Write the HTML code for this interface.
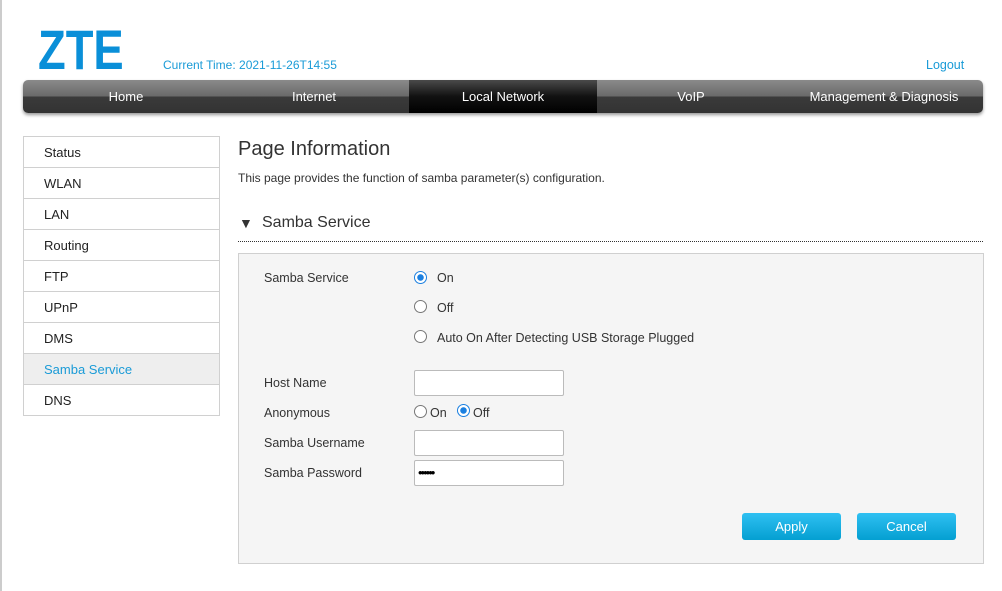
<!DOCTYPE html>
<html><head><style>
body{margin:0;width:1002px;height:591px;background:#fff;font-family:"Liberation Sans",sans-serif;font-size:12px;color:#333;position:relative;overflow:hidden}
.a{position:absolute}
.lb{left:0;top:0;width:2px;height:591px;background:#ccc}
.logo{left:38px;top:26px;font-size:56px;font-weight:bold;color:#0a8fd8;letter-spacing:0px;line-height:48px;transform:scaleX(0.81);transform-origin:0 0}
.nav{left:23px;top:80px;width:960px;height:33px;border-radius:5px;overflow:hidden;background:linear-gradient(#8a8a8a 0,#6a6a6a 48%,#3a3a3a 52%,#333 100%);box-shadow:0 2px 3px #999}
.nav div{position:absolute;top:0;height:33px;width:188px;line-height:33px;text-align:center;color:#fff;font-size:13px}
.nav .on{background:linear-gradient(#4a4a4a,#111 50%,#000)}
.side{left:23px;top:136px;width:195px;border:1px solid #d0d0d0}
.side div{height:30px;line-height:31px;padding-left:20px;border-top:1px solid #d0d0d0;font-size:13px;color:#222}
.side div:first-child{border-top:none}
.side .sel{background:#eee;color:#1a9bd7}
.panel{left:238px;top:253px;width:744px;height:309px;background:#f5f5f5;border:1px solid #d0d0d0}
.lbl{font-size:12.5px;color:#333}
.radio{width:11px;height:11px;border:1px solid #777;border-radius:50%;background:#fff}
.radio.c{border-color:#1a7fe0;background:radial-gradient(#1a7fe0 0,#1a7fe0 3px,#fff 3.5px)}
.inp{width:148px;height:24px;border:1px solid #bbb;border-radius:2px;background:#fff}
.btn{width:99px;height:27px;border-radius:3px;background:linear-gradient(#2fc0f2,#049fd1);color:#fff;text-align:center;line-height:27px;font-size:13px}
</style></head><body>
<div class="a lb"></div>
<div class="a logo">ZTE</div>
<div class="a" style="left:163px;top:58px;color:#1a9bd7;font-size:12px">Current Time: 2021-11-26T14:55</div>
<div class="a" style="left:926px;top:58px;color:#1a9bd7;font-size:12.5px">Logout</div>
<div class="a nav">
<div style="left:9px">Home</div><div style="left:197px">Internet</div><div class="on" style="left:386px">Local Network</div><div style="left:574px">VoIP</div><div style="left:762px;width:198px">Management &amp; Diagnosis</div>
</div>
<div class="a side"><div>Status</div><div>WLAN</div><div>LAN</div><div>Routing</div><div>FTP</div><div>UPnP</div><div>DMS</div><div class="sel">Samba Service</div><div>DNS</div></div>
<div class="a" style="left:238px;top:138px;font-size:20px;color:#333">Page Information</div>
<div class="a" style="left:238px;top:171px;font-size:12px">This page provides the function of samba parameter(s) configuration.</div>
<div class="a" style="left:239px;top:215px;font-size:14px;color:#333">▼</div>
<div class="a" style="left:262px;top:214px;font-size:16px;color:#333">Samba Service</div>
<div class="a" style="left:238px;top:241px;width:745px;border-top:1px dotted #333"></div>
<div class="a panel"></div>
<div class="a lbl" style="left:264px;top:271px">Samba Service</div>
<div class="a radio c" style="left:414px;top:271px"></div><div class="a lbl" style="left:437px;top:271px">On</div>
<div class="a radio" style="left:414px;top:300px"></div><div class="a lbl" style="left:437px;top:301px">Off</div>
<div class="a radio" style="left:414px;top:330px"></div><div class="a lbl" style="left:437px;top:331px">Auto On After Detecting USB Storage Plugged</div>
<div class="a lbl" style="left:264px;top:376px">Host Name</div><div class="a inp" style="left:414px;top:370px"></div>
<div class="a lbl" style="left:264px;top:406px">Anonymous</div>
<div class="a radio" style="left:414px;top:405px"></div><div class="a lbl" style="left:430px;top:406px">On</div>
<div class="a radio c" style="left:457px;top:404px"></div><div class="a lbl" style="left:473px;top:406px">Off</div>
<div class="a lbl" style="left:264px;top:436px">Samba Username</div><div class="a inp" style="left:414px;top:430px"></div>
<div class="a lbl" style="left:264px;top:466px">Samba Password</div><div class="a inp" style="left:414px;top:460px"><span style="position:absolute;left:3px;top:4px;font-size:13px;color:#000;letter-spacing:-2px">••••••</span></div>
<div class="a btn" style="left:742px;top:513px">Apply</div>
<div class="a btn" style="left:857px;top:513px">Cancel</div>
</body></html>
